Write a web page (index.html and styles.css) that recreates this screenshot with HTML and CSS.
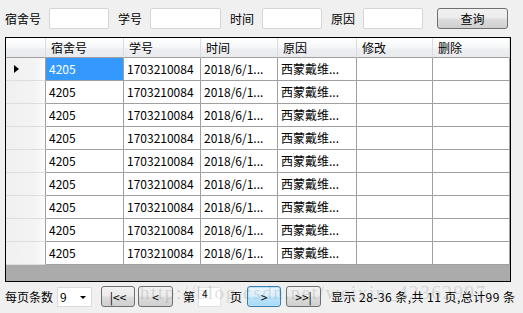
FILE: index.html
```html
<!DOCTYPE html>
<html lang="zh-CN">
<head>
    <meta charset="UTF-8">
    <title>违纪查询</title>
    <link rel="stylesheet" href="styles.css">
</head>
<body>
    <div class="query-bar">
        <span class="label">宿舍号</span><input class="box" type="text">
        <span class="label">学号</span><input class="box wide" type="text">
        <span class="label">时间</span><input class="box" type="text">
        <span class="label">原因</span><input class="box" type="text">
        <button class="btn query">查询</button>
    </div>

    <div class="grid">
        <div class="row head">
            <div class="cell rowhead"></div>
            <div class="cell">宿舍号</div>
            <div class="cell">学号</div>
            <div class="cell">时间</div>
            <div class="cell">原因</div>
            <div class="cell">修改</div>
            <div class="cell">删除</div>
        </div>
        <div class="row">
            <div class="cell rowhead current"></div>
            <div class="cell selected">4205</div>
            <div class="cell">1703210084</div>
            <div class="cell">2018/6/1...</div>
            <div class="cell">西蒙戴维...</div>
            <div class="cell"></div>
            <div class="cell"></div>
        </div>
        <div class="row">
            <div class="cell rowhead"></div>
            <div class="cell">4205</div>
            <div class="cell">1703210084</div>
            <div class="cell">2018/6/1...</div>
            <div class="cell">西蒙戴维...</div>
            <div class="cell"></div>
            <div class="cell"></div>
        </div>
        <div class="row">
            <div class="cell rowhead"></div>
            <div class="cell">4205</div>
            <div class="cell">1703210084</div>
            <div class="cell">2018/6/1...</div>
            <div class="cell">西蒙戴维...</div>
            <div class="cell"></div>
            <div class="cell"></div>
        </div>
        <div class="row">
            <div class="cell rowhead"></div>
            <div class="cell">4205</div>
            <div class="cell">1703210084</div>
            <div class="cell">2018/6/1...</div>
            <div class="cell">西蒙戴维...</div>
            <div class="cell"></div>
            <div class="cell"></div>
        </div>
        <div class="row">
            <div class="cell rowhead"></div>
            <div class="cell">4205</div>
            <div class="cell">1703210084</div>
            <div class="cell">2018/6/1...</div>
            <div class="cell">西蒙戴维...</div>
            <div class="cell"></div>
            <div class="cell"></div>
        </div>
        <div class="row">
            <div class="cell rowhead"></div>
            <div class="cell">4205</div>
            <div class="cell">1703210084</div>
            <div class="cell">2018/6/1...</div>
            <div class="cell">西蒙戴维...</div>
            <div class="cell"></div>
            <div class="cell"></div>
        </div>
        <div class="row">
            <div class="cell rowhead"></div>
            <div class="cell">4205</div>
            <div class="cell">1703210084</div>
            <div class="cell">2018/6/1...</div>
            <div class="cell">西蒙戴维...</div>
            <div class="cell"></div>
            <div class="cell"></div>
        </div>
        <div class="row">
            <div class="cell rowhead"></div>
            <div class="cell">4205</div>
            <div class="cell">1703210084</div>
            <div class="cell">2018/6/1...</div>
            <div class="cell">西蒙戴维...</div>
            <div class="cell"></div>
            <div class="cell"></div>
        </div>
        <div class="row">
            <div class="cell rowhead"></div>
            <div class="cell">4205</div>
            <div class="cell">1703210084</div>
            <div class="cell">2018/6/1...</div>
            <div class="cell">西蒙戴维...</div>
            <div class="cell"></div>
            <div class="cell"></div>
        </div>
    </div>

    <div class="pager">
        <span>每页条数</span>
        <div class="combo"><span>9</span><i class="arrow"></i></div>
        <button class="btn nav first">|&lt;&lt;</button>
        <button class="btn nav prev">&lt;</button>
        <span class="page-label">第</span>
        <div class="page-box">4</div>
        <span class="page-label">页</span>
        <button class="btn nav next focus">&gt;</button>
        <button class="btn nav last">&gt;&gt;|</button>
        <span class="summary">显示 28-36 条,共 11 页,总计99 条</span>
    </div>

    <div class="watermark">http://blog.csdn.net/weixin_42362997</div>
</body>
</html>
```

FILE: styles.css
```css
/* 页面基本样式 */
body {
    margin: 0;
    width: 523px;
    height: 313px;
    overflow: hidden;
    position: relative;
    background-color: #f0f0f0;
    font-family: "Noto Sans CJK SC", sans-serif;
    font-size: 12px;
    color: #000;
}

/* 查询栏 */
.query-bar {
    display: flex;
    align-items: center;
    height: 21px;
    padding: 8px 5px 0;
}

.query-bar .label {
    margin-right: 8px;
    line-height: 21px;
}

.query-bar .box {
    width: 60px;
    height: 21px;
    box-sizing: border-box;
    margin: 0 9px 0 0;
    padding: 0;
    border: 1px solid #d6d6d6;
    border-radius: 2px;
    background: #fff;
}

.query-bar .box.wide {
    width: 71px;
}

/* 按钮 */
.btn {
    box-sizing: border-box;
    height: 21px;
    padding: 0;
    font-family: inherit;
    font-size: 12px;
    color: #000;
    border: 1px solid #707070;
    border-radius: 3px;
    background: linear-gradient(#f2f2f2 0%, #ebebeb 48%, #dddddd 52%, #cfcfcf 100%);
}

.query {
    width: 71px;
    margin-left: 5px;
}

/* 表格 */
.grid {
    width: 506px;
    height: 245px;
    box-sizing: border-box;
    margin: 8px 0 0 5px;
    border: 1px solid #000;
    background-color: #ababab;
    display: flex;
    flex-direction: column;
}

.row {
    display: grid;
    grid-template-columns: 40px 78px 77px 77px 79px 76px 77px;
    height: 23px;
    flex-shrink: 0;
    background-color: #fff;
}

.cell {
    box-sizing: border-box;
    padding-left: 3px;
    line-height: 22px;
    white-space: nowrap;
    overflow: hidden;
    border-right: 1px solid #a0a0a0;
    border-bottom: 1px solid #a0a0a0;
}

.row.head {
    height: 20px;
    background: linear-gradient(#ffffff 0%, #f7f8fa 45%, #eeeff2 55%, #e8e9ec 100%);
}

.head .cell {
    padding-left: 5px;
    line-height: 19px;
    border-right-color: #dcdcdc;
}

.rowhead {
    position: relative;
    background: linear-gradient(to right, #f0f0f0 0%, #f4f4f4 75%, #fcfcfc 100%);
    border-bottom-color: #dedede;
}

.head .rowhead {
    background: transparent;
    border-bottom-color: #a0a0a0;
}

.current::before {
    content: "";
    position: absolute;
    left: 8px;
    top: 7px;
    border-top: 4px solid transparent;
    border-bottom: 4px solid transparent;
    border-left: 5px solid #000;
}

.selected {
    background-color: #3399ff;
    color: #fff;
}

/* 分页栏 */
.pager {
    display: flex;
    align-items: center;
    height: 21px;
    margin-top: 4px;
    padding-left: 5px;
}

.combo {
    position: relative;
    box-sizing: border-box;
    width: 35px;
    height: 20px;
    margin-left: 4px;
    padding-left: 2px;
    line-height: 17px;
    border: 1px solid #dcdcdc;
    background: #fff;
}

.combo .arrow {
    position: absolute;
    right: 5px;
    top: 8px;
    border-left: 3px solid transparent;
    border-right: 3px solid transparent;
    border-top: 3px solid #000;
}

.nav {
    width: 34px;
}

.first {
    margin-left: 9px;
}

.prev {
    width: 35px;
    margin-left: 3px;
}

.page-label {
    margin-left: 10px;
}

.page-box {
    box-sizing: border-box;
    width: 23px;
    height: 20px;
    margin: 0 9px 0 3px;
    padding-left: 3px;
    font-size: 10px;
    line-height: 11px;
    border: 1px solid #e2e2e2;
    background: #fff;
}

.page-box + .page-label {
    margin-left: 0;
}

.next {
    margin-left: 5px;
}

.next.focus {
    border-color: #3c7fb1;
    background: linear-gradient(#eaf6fd 0%, #d9f0fc 48%, #bee6fd 52%, #a7d9f5 100%);
    box-shadow: inset 0 0 0 1px #b8e2f8;
}

.last {
    width: 35px;
    margin-left: 5px;
}

.summary {
    margin-left: 10px;
    letter-spacing: 0.45px;
    white-space: nowrap;
}

/* 水印 */
.watermark {
    position: absolute;
    left: 140px;
    top: 282px;
    font-family: "Liberation Serif", serif;
    font-size: 19px;
    letter-spacing: 1.6px;
    color: rgba(110, 110, 110, 0.22);
    white-space: nowrap;
    pointer-events: none;
}
```
